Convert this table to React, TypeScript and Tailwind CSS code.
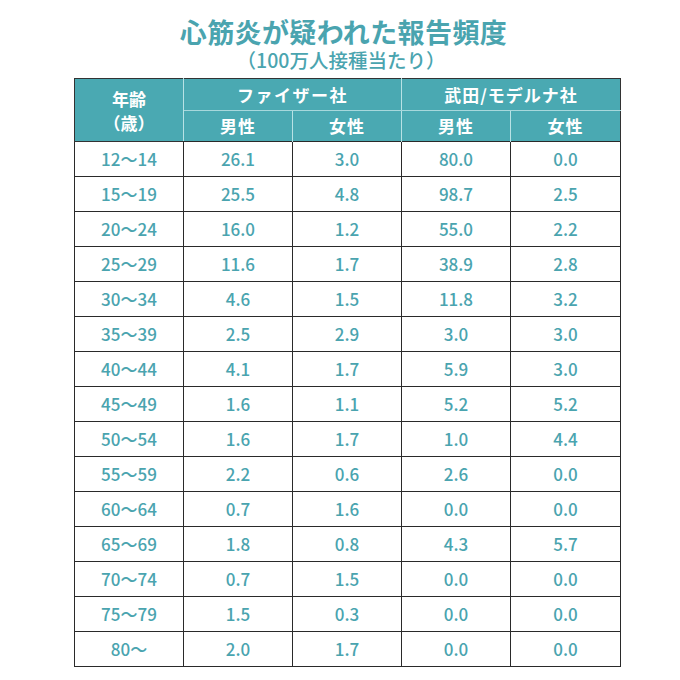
import React from "react";

const rows: [string, string, string, string, string][] = [
  ["12〜14", "26.1", "3.0", "80.0", "0.0"],
  ["15〜19", "25.5", "4.8", "98.7", "2.5"],
  ["20〜24", "16.0", "1.2", "55.0", "2.2"],
  ["25〜29", "11.6", "1.7", "38.9", "2.8"],
  ["30〜34", "4.6", "1.5", "11.8", "3.2"],
  ["35〜39", "2.5", "2.9", "3.0", "3.0"],
  ["40〜44", "4.1", "1.7", "5.9", "3.0"],
  ["45〜49", "1.6", "1.1", "5.2", "5.2"],
  ["50〜54", "1.6", "1.7", "1.0", "4.4"],
  ["55〜59", "2.2", "0.6", "2.6", "0.0"],
  ["60〜64", "0.7", "1.6", "0.0", "0.0"],
  ["65〜69", "1.8", "0.8", "4.3", "5.7"],
  ["70〜74", "0.7", "1.5", "0.0", "0.0"],
  ["75〜79", "1.5", "0.3", "0.0", "0.0"],
  ["80〜", "2.0", "1.7", "0.0", "0.0"],
];

export default function App() {
  return (
    <div
      className="w-[680px] h-[680px] bg-white overflow-hidden"
      style={{ fontFamily: '"Noto Sans CJK JP", "Noto Sans", sans-serif' }}
    >
      <div className="flex flex-col items-center pt-[18px] text-[#4aa4af]">
        <div className="text-[27px] leading-[28px] font-bold tracking-[0.4px] ml-[7px]">
          心筋炎が疑われた報告頻度
        </div>
        <div className="text-[19.5px] leading-[24px] font-medium mt-[2px] ml-[2px]">
          （100万人接種当たり）
        </div>
      </div>
      <div className="ml-[74px] mt-[6px]">
        <table className="border-collapse table-fixed w-[546px] text-[17px] font-medium">
          <colgroup>
            <col className="w-[109px]" />
            <col className="w-[109px]" />
            <col className="w-[109px]" />
            <col className="w-[109px]" />
            <col className="w-[110px]" />
          </colgroup>
          <thead>
            <tr className="h-[32px] bg-[#4aa9b2] text-white">
              <th
                rowSpan={2}
                className="border border-[#333] border-r-[#b8e2e5] font-bold leading-[21px] align-middle"
              >
                <div className="pb-[3px]">年齢</div>
                <div>（歳）</div>
              </th>
              <th
                colSpan={2}
                className="border-t border-[#333] border-t-[#333] border-b border-b-[#a7d8dc] border-r border-r-[#b8e2e5] font-bold tracking-[1.5px] pt-[1px]"
              >
                ファイザー社
              </th>
              <th
                colSpan={2}
                className="border-t border-[#333] border-t-[#333] border-b border-b-[#a7d8dc] border-r border-r-[#333] font-bold tracking-[1px] pt-[1px]"
              >
                武田/モデルナ社
              </th>
            </tr>
            <tr className="h-[31px] bg-[#4aa9b2] text-white">
              <th className="border-r border-[#b8e2e5] font-bold tracking-[1px]">男性</th>
              <th className="border-r border-[#b8e2e5] font-bold tracking-[1px]">女性</th>
              <th className="border-r border-[#b8e2e5] font-bold tracking-[1px]">男性</th>
              <th className="border-r border-r-[#333] font-bold tracking-[1px]">女性</th>
            </tr>
          </thead>
          <tbody className="text-[#4aa4af]">
            {rows.map((r, i) => (
              <tr key={i} className="h-[35px]">
                {r.map((c, j) => (
                  <td
                    key={j}
                    className="border border-[#2a2a2a] text-center align-middle leading-[20px]"
                  >
                    {c}
                  </td>
                ))}
              </tr>
            ))}
          </tbody>
        </table>
      </div>
    </div>
  );
}
